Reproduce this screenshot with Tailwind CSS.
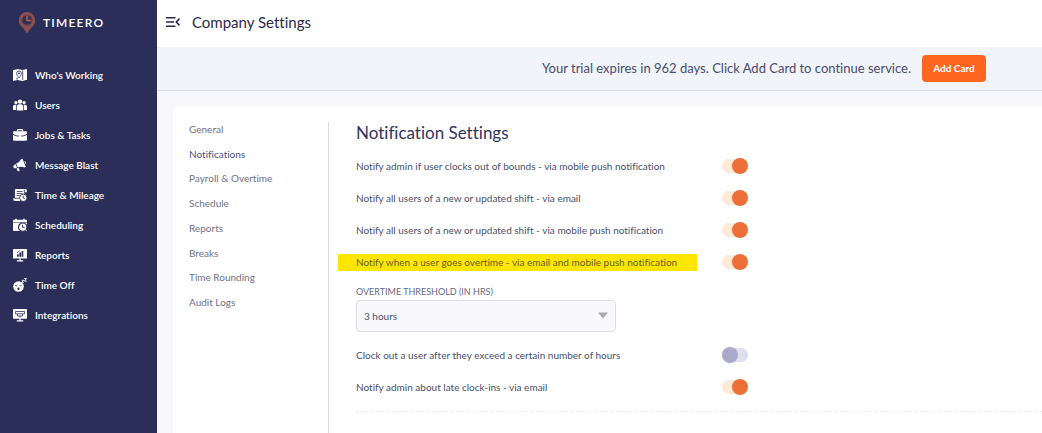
<!DOCTYPE html>
<html lang="en">
<head>
  <meta charset="UTF-8" />
  <meta name="viewport" content="width=device-width, initial-scale=1" />
  <title>Company Settings - Timeero</title>
  <script src="https://cdn.jsdelivr.net/npm/@tailwindcss/browser@4"></script>
</head>
<body class="bg-[#f8f8fc] font-['Lato','Open_Sans',sans-serif] [font-variant-ligatures:none] text-[#4b4f6b]">
  <div class="flex min-h-screen">
    <!-- Sidebar -->
    <aside class="w-[157px] shrink-0 bg-[#2a2e58] text-white">
      <a href="#" class="flex items-center gap-[7px] pl-[18px] pt-[11px] mb-[25px]">
        <svg class="w-[18px] h-6" viewBox="0 0 18 24">
          <path d="M9 1a8.300 8.300 0 0 0-8.300 8.300c0 3.600 2.100 6 4.800 8.200L9 22.500l3.500-5c2.700-2.200 4.800-4.600 4.800-8.200A8.300 8.300 0 0 0 9 1z" fill="#8a5050" />
          <circle cx="9" cy="9.300" r="5.300" fill="#2a2e58" />
          <path d="M9 4.800v4.700h4.200" fill="none" stroke="#b85f4b" stroke-width="1.600" />
          <circle cx="9" cy="9.300" r="4.800" fill="none" stroke="#6b4557" stroke-width="0.800" />
        </svg>
        <span class="text-xs leading-4 font-semibold tracking-widest">TIMEERO</span>
      </a>
      <nav>
        <ul class="text-[10px] font-semibold">
          <li>
            <a href="#" class="flex items-center gap-2 h-[30px] pl-[13px]">
              <svg class="w-3.5 h-3.5" viewBox="0 0 14 14">
                <path d="M0 2.200 4.500 1l5 1L14 1v10.800L9.500 13l-5-1L0 13z" fill="#fff" />
                <path d="M6 9.800C4.500 8 3.600 6.800 3.600 5.400a2.400 2.400 0 0 1 4.800 0C8.400 6.800 7.500 8 6 9.800zM9.700 2.500V12M4 9.500v2.300" fill="none" stroke="#2a2e58" stroke-width="0.800" />
                <circle cx="6" cy="5.400" r="0.900" fill="#2a2e58" />
              </svg>
              Who's Working
            </a>
          </li>
          <li>
            <a href="#" class="flex items-center gap-2 h-[30px] pl-[13px]">
              <svg class="w-3.5 h-3.5" viewBox="0 0 14 14" fill="#fff">
                <circle cx="7" cy="3.600" r="2.200" />
                <circle cx="2.900" cy="4.600" r="1.600" />
                <circle cx="11.100" cy="4.600" r="1.600" />
                <path d="M3.700 12.500V8.800c0-1.600 1-2.500 2.300-2.500h2c1.300 0 2.300.9 2.300 2.500v3.700zM0 12V8.800c0-1.300.9-2 2-2h1.500c-.4.600-.5 1.200-.5 2V12zM14 12V8.800c0-1.300-.9-2-2-2h-1.500c.4.600.5 1.200.5 2V12z" />
              </svg>
              Users
            </a>
          </li>
          <li>
            <a href="#" class="flex items-center gap-2 h-[30px] pl-[13px]">
              <svg class="w-3.5 h-3.5" viewBox="0 0 14 14">
                <path d="M4.500 3.500V2.300c0-.4.200-.6.600-.6h3.800c.4 0 .6.200.6.600v1.200" fill="none" stroke="#fff" stroke-width="1.200" />
                <rect y="3.200" width="14" height="9.600" rx="1.200" fill="#fff" />
                <path d="M0 6.300c2 1.300 4.500 1.900 7 1.900s5-.6 7-1.900" fill="none" stroke="#2a2e58" stroke-width="0.900" />
                <rect x="5.800" y="7.300" width="2.400" height="1.600" rx="0.500" fill="#fff" />
              </svg>
              Jobs &amp; Tasks
            </a>
          </li>
          <li>
            <a href="#" class="flex items-center gap-2 h-[30px] pl-[13px]">
              <svg class="w-3.5 h-3.5" viewBox="0 0 14 14" fill="#fff">
                <path d="M7.800 1.500 9.500.8l3.300 8.200-1.500.6C9.500 8.500 7 8.500 4.700 9.400L3.100 5.600C5.300 4.700 6.900 3.300 7.800 1.500z" />
                <path d="M2.500 5.900 4 9.700l-1.700.6C.9 10.800-.1 8.700.5 7.700c.3-.6 1-1.200 2-1.800zM3.500 10.500l1.900-.7 1.400 2.800-1.900.8zM11.300 3.300c1.300-.3 2.300 1.900 1.200 2.700z" />
              </svg>
              Message Blast
            </a>
          </li>
          <li>
            <a href="#" class="flex items-center gap-2 h-[30px] pl-[13px]">
              <svg class="w-3.5 h-3.5" viewBox="0 0 14 14">
                <path d="M3 1h9.500c.9 0 1.300.8 1.300 1.600v1.700h-2.500V13H2c-1.200 0-1.800-.8-1.800-2v-.8h1.700V2.300C1.900 1.500 2.300 1 3 1z" fill="#fff" />
                <path d="M3.700 3.500h5.800M3.700 5.500h5.800M3.700 7.500h3M1.500 10.300h4.500M11.300 1.500v3" fill="none" stroke="#2a2e58" stroke-width="0.800" />
                <circle cx="10.300" cy="9.800" r="3.700" fill="#fff" stroke="#2a2e58" stroke-width="0.900" />
                <path d="M10.200 7.800v2.200l1.500.8" fill="none" stroke="#2a2e58" stroke-width="0.900" />
              </svg>
              Time &amp; Mileage
            </a>
          </li>
          <li>
            <a href="#" class="flex items-center gap-2 h-[30px] pl-[13px]">
              <svg class="w-3.5 h-3.5" viewBox="0 0 14 14">
                <path d="M1 1.800h1.200V.8h1.600v1h6.400v-1h1.600v1H13c.6 0 1 .4 1 1v9.200c0 .6-.4 1-1 1H1c-.6 0-1-.4-1-1V2.800c0-.6.400-1 1-1z" fill="#fff" />
                <path d="M0 4.500h14" stroke="#2a2e58" stroke-width="0.500" />
                <circle cx="9.700" cy="9.200" r="4.200" fill="#fff" stroke="#2a2e58" stroke-width="1.200" />
                <path d="M9.600 6.900v2.400h2" fill="none" stroke="#2a2e58" stroke-width="1" />
              </svg>
              Scheduling
            </a>
          </li>
          <li>
            <a href="#" class="flex items-center gap-2 h-[30px] pl-[13px]">
              <svg class="w-3.5 h-3.5" viewBox="0 0 14 14">
                <rect y="1" width="14" height="9.500" rx="0.600" fill="#fff" />
                <path d="M7 10.500V13M3.800 12.900h6.400" stroke="#fff" stroke-width="1.300" />
                <path d="M4 6.200h1.700v2.600H4zM6.300 4.600H8v4.200H6.300zM8.600 3H10.300v5.800H8.600z" fill="#2a2e58" />
                <path d="M4 4.800 6.800 2.800" stroke="#2a2e58" stroke-width="0.700" />
              </svg>
              Reports
            </a>
          </li>
          <li>
            <a href="#" class="flex items-center gap-2 h-[30px] pl-[13px]">
              <svg class="w-3.5 h-3.5" viewBox="0 0 14 14">
                <circle cx="5.500" cy="8.500" r="5.300" fill="#fff" />
                <path d="M2 7.300c.5.700 1.600.7 2.200 0M6.700 7.300c.5.700 1.600.7 2.200 0" fill="none" stroke="#2a2e58" stroke-width="0.800" />
                <ellipse cx="5.500" cy="10.800" rx="1.100" ry="1.300" fill="#2a2e58" />
                <path d="M8.700 2.300h1.900L8.900 4.300h1.900M11.200.5h2.300l-2.100 2.600h2.300" fill="none" stroke="#fff" stroke-width="0.900" />
              </svg>
              Time Off
            </a>
          </li>
          <li>
            <a href="#" class="flex items-center gap-2 h-[30px] pl-[13px]">
              <svg class="w-3.5 h-3.5" viewBox="0 0 14 14">
                <rect y="1" width="14" height="9.700" rx="0.600" fill="#fff" />
                <path d="M7 10.500V13M3.800 12.900h6.400" stroke="#fff" stroke-width="1.300" />
                <path d="M2.500 3.500h9v2.300h-9zM4.500 6v2h5V6M7 8v1.500" fill="none" stroke="#2a2e58" stroke-width="0.800" />
              </svg>
              Integrations
            </a>
          </li>
        </ul>
      </nav>
    </aside>

    <!-- Main content -->
    <main class="flex-1 min-w-0 flex flex-col">
      <header class="flex items-center gap-3 h-[47px] pl-[9px] pb-1 bg-white">
        <button type="button" aria-label="Toggle sidebar">
          <svg class="block w-3.5 h-3.5" viewBox="0 0 14 14" fill="none" stroke="#2a2b48" stroke-width="1.600">
            <path d="M0 2.800h9.500M0 7h8M0 11.200h9.500M13.500 3.500 10.300 7l3.200 3.500" />
          </svg>
        </button>
        <h1 class="text-[15px] leading-5 text-[#2a2b48]">Company Settings</h1>
      </header>

      <div class="flex items-center justify-end gap-[11px] h-11 pr-14 bg-[#f1f5f9] border-b border-[#dcdce6]">
        <p class="text-[13px] text-[#4a4b70]">Your trial expires in 962 days. Click Add Card to continue service.</p>
        <button type="button" class="w-16 h-[27px] rounded bg-[#ff6620] text-[10px] font-bold text-white">Add Card</button>
      </div>

      <section class="flex-1 flex mt-[15px] ml-4 pt-4 pl-4 rounded-tl-md bg-white">
        <nav class="w-[140px] shrink-0 border-r border-[#d9d9df] text-[10px] text-[#6f7285]">
          <ul class="grid auto-rows-fr h-[198px] -mt-[5px]">
            <li class="flex items-center"><a href="#">General</a></li>
            <li class="flex items-center"><a href="#" class="text-[#4d4f86]">Notifications</a></li>
            <li class="flex items-center"><a href="#">Payroll &amp; Overtime</a></li>
            <li class="flex items-center"><a href="#">Schedule</a></li>
            <li class="flex items-center"><a href="#">Reports</a></li>
            <li class="flex items-center"><a href="#">Breaks</a></li>
            <li class="flex items-center"><a href="#">Time Rounding</a></li>
            <li class="flex items-center"><a href="#">Audit Logs</a></li>
          </ul>
        </nav>

        <form class="flex-1 min-w-0 pl-[27px] text-[10px]">
          <h2 class="text-[17px] leading-[22px] mb-1.5 text-[#32345c]">Notification Settings</h2>
          <div class="max-w-[392px]">
            <div class="flex items-center justify-between h-8">
              <label for="bounds">Notify admin if user clocks out of bounds - via mobile push notification</label>
              <input id="bounds" type="checkbox" role="switch" checked class="appearance-none flex items-center w-[26px] h-3.5 rounded-full bg-[#e0dff0] before:w-4 before:h-4 before:shrink-0 before:rounded-full before:bg-[#a9a9cb] checked:bg-[#ffead6] checked:before:ml-2.5 checked:before:bg-[#ed6f38]" />
            </div>
            <div class="flex items-center justify-between h-8">
              <label for="shift-email">Notify all users of a new or updated shift - via email</label>
              <input id="shift-email" type="checkbox" role="switch" checked class="appearance-none flex items-center w-[26px] h-3.5 rounded-full bg-[#e0dff0] before:w-4 before:h-4 before:shrink-0 before:rounded-full before:bg-[#a9a9cb] checked:bg-[#ffead6] checked:before:ml-2.5 checked:before:bg-[#ed6f38]" />
            </div>
            <div class="flex items-center justify-between h-8">
              <label for="shift-push">Notify all users of a new or updated shift - via mobile push notification</label>
              <input id="shift-push" type="checkbox" role="switch" checked class="appearance-none flex items-center w-[26px] h-3.5 rounded-full bg-[#e0dff0] before:w-4 before:h-4 before:shrink-0 before:rounded-full before:bg-[#a9a9cb] checked:bg-[#ffead6] checked:before:ml-2.5 checked:before:bg-[#ed6f38]" />
            </div>
            <div class="flex items-center justify-between h-8">
              <label for="overtime" class="w-[359px] -ml-[18px] pl-[18px] leading-[17px] bg-[#fee600] text-[#665f1c]">Notify when a user goes overtime - via email and mobile push notification</label>
              <input id="overtime" type="checkbox" role="switch" checked class="appearance-none flex items-center w-[26px] h-3.5 rounded-full bg-[#e0dff0] before:w-4 before:h-4 before:shrink-0 before:rounded-full before:bg-[#a9a9cb] checked:bg-[#ffead6] checked:before:ml-2.5 checked:before:bg-[#ed6f38]" />
            </div>

            <label for="threshold" class="block mt-2 mb-0.5 text-[9px] leading-3 text-[#66688a]">OVERTIME THRESHOLD (IN HRS)</label>
            <div class="relative w-[260px] mb-[7px]">
              <select id="threshold" class="appearance-none block w-full h-8 pl-[7px] rounded border border-[#dcdce8] bg-[#f8f8fd]">
                <option>3 hours</option>
              </select>
              <svg class="absolute right-2 top-3 w-2.5 h-[7px] pointer-events-none" viewBox="0 0 10 7">
                <path d="M0 0.500h10L5 6.500z" fill="#a9a9ae" />
              </svg>
            </div>

            <div class="flex items-center justify-between h-8">
              <label for="exceed">Clock out a user after they exceed a certain number of hours</label>
              <input id="exceed" type="checkbox" role="switch" class="appearance-none flex items-center w-[26px] h-3.5 rounded-full bg-[#e0dff0] before:w-4 before:h-4 before:shrink-0 before:rounded-full before:bg-[#a9a9cb] checked:bg-[#ffead6] checked:before:ml-2.5 checked:before:bg-[#ed6f38]" />
            </div>
            <div class="flex items-center justify-between h-8">
              <label for="late">Notify admin about late clock-ins - via email</label>
              <input id="late" type="checkbox" role="switch" checked class="appearance-none flex items-center w-[26px] h-3.5 rounded-full bg-[#e0dff0] before:w-4 before:h-4 before:shrink-0 before:rounded-full before:bg-[#a9a9cb] checked:bg-[#ffead6] checked:before:ml-2.5 checked:before:bg-[#ed6f38]" />
            </div>
          </div>
          <hr class="mt-2 border-t border-dashed border-[#ebebf0]" />
        </form>
      </section>
    </main>
  </div>
</body>
</html>
